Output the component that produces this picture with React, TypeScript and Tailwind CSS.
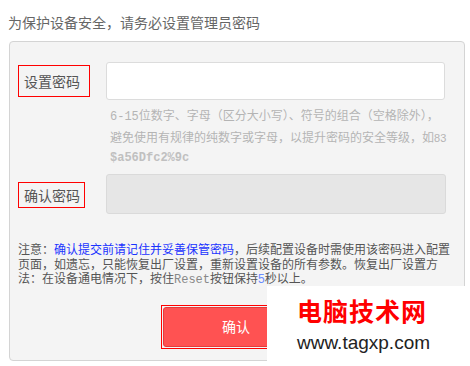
import React from "react";

const cjk = { fontFamily: '"Noto Sans CJK SC", "Liberation Sans", sans-serif' };
const mono = { fontFamily: '"Liberation Mono", "DejaVu Sans Mono", monospace' };

export default function App() {
  return (
    <div className="relative w-[470px] h-[366px] bg-white overflow-hidden" style={cjk}>
      <div className="pl-[8px] pt-[13px] h-[41px] text-[14px] leading-[18px] text-[#666]">
        为保护设备安全，请务必设置管理员密码
      </div>
      <div className="ml-[9px] w-[456px] h-[320px] border border-[#d4d4d4] rounded-[4px] bg-[#f4f4f4] pt-[20px]">
        {/* Row 1 */}
        <div className="flex">
          <div className="w-[96px] flex items-start pt-[3px]">
            <div className="ml-[8px] w-[72px] h-[32px] border border-[#ff0000] flex items-center pl-[5px] text-[14px] text-[#555]">
              设置密码
            </div>
          </div>
          <div className="w-[339px] h-[38px] bg-white border border-[#dcdcdc] rounded-[3px]" />
        </div>
        <div className="ml-[100px] mt-[5px] w-[345px] text-[12px] leading-[20px] text-[#b4b4b4]">
          <div className="whitespace-nowrap">
            <span style={mono}>6-15</span>位数字、字母（区分大小写）、符号的组合（空格除外），
          </div>
          <div className="whitespace-nowrap">
            避免使用有规律的纯数字或字母，以提升密码的安全等级，如<span className="text-[11px]" style={{ fontFamily: '"Liberation Sans", sans-serif' }}>83</span>
          </div>
          <div className="whitespace-nowrap font-bold text-[#c0c0c0]" style={mono}>
            $a56Dfc2%9c
          </div>
        </div>
        {/* Row 2 */}
        <div className="flex items-center mt-[6px]">
          <div className="w-[96px]">
            <div className="ml-[8px] w-[67px] h-[26px] border border-[#ff0000] flex items-center pl-[5px] text-[14px] text-[#555] mt-[2px]">
              确认密码
            </div>
          </div>
          <div className="w-[340px] h-[40px] bg-[#e6e6e6] border border-[#dadada] rounded-[3px]" />
        </div>
        {/* Notice */}
        <div className="mt-[28px] px-[8px] w-[452px] text-[12px] leading-[14.5px] text-[#555]">
          注意：<span className="text-[#1a33ff]">确认提交前请记住并妥善保管密码</span>，后续配置设备时需使用该密码进入配置页面，如遗忘，只能恢复出厂设置，重新设置设备的所有参数。恢复出厂设置方法：在设备通电情况下，按住<span className="text-[#888]" style={mono}>Reset</span>按钮保持<span className="text-[#6a8cff]" style={{ fontFamily: '"Liberation Sans", sans-serif' }}>5</span>秒以上。
        </div>
        {/* Button */}
        <div className="flex justify-center mt-[17px] pr-[2px]">
          <div className="border border-[#ff0000] p-[1px]">
            <button className="w-[146px] h-[40px] bg-[#ff5252] border border-[#e23c3c] rounded-[3px] text-white text-[14px] flex items-center justify-center" style={cjk}>
              确认
            </button>
          </div>
        </div>
      </div>
      {/* Watermark */}
      <div className="absolute left-[267px] top-[286px] w-[198px] h-[75px] bg-white flex flex-col items-start pl-[30px] pt-[10px]">
        <div className="text-[25px] leading-[28px] font-bold text-[#ff0000] tracking-[1px]" style={{ fontFamily: '"Noto Sans CJK SC", sans-serif' }}>
          电脑技术网
        </div>
        <div className="mt-[9px] text-[19px] leading-[20px] text-[#222]" style={{ fontFamily: '"Liberation Sans", Arial, sans-serif' }}>
          www.tagxp.com
        </div>
      </div>
    </div>
  );
}
